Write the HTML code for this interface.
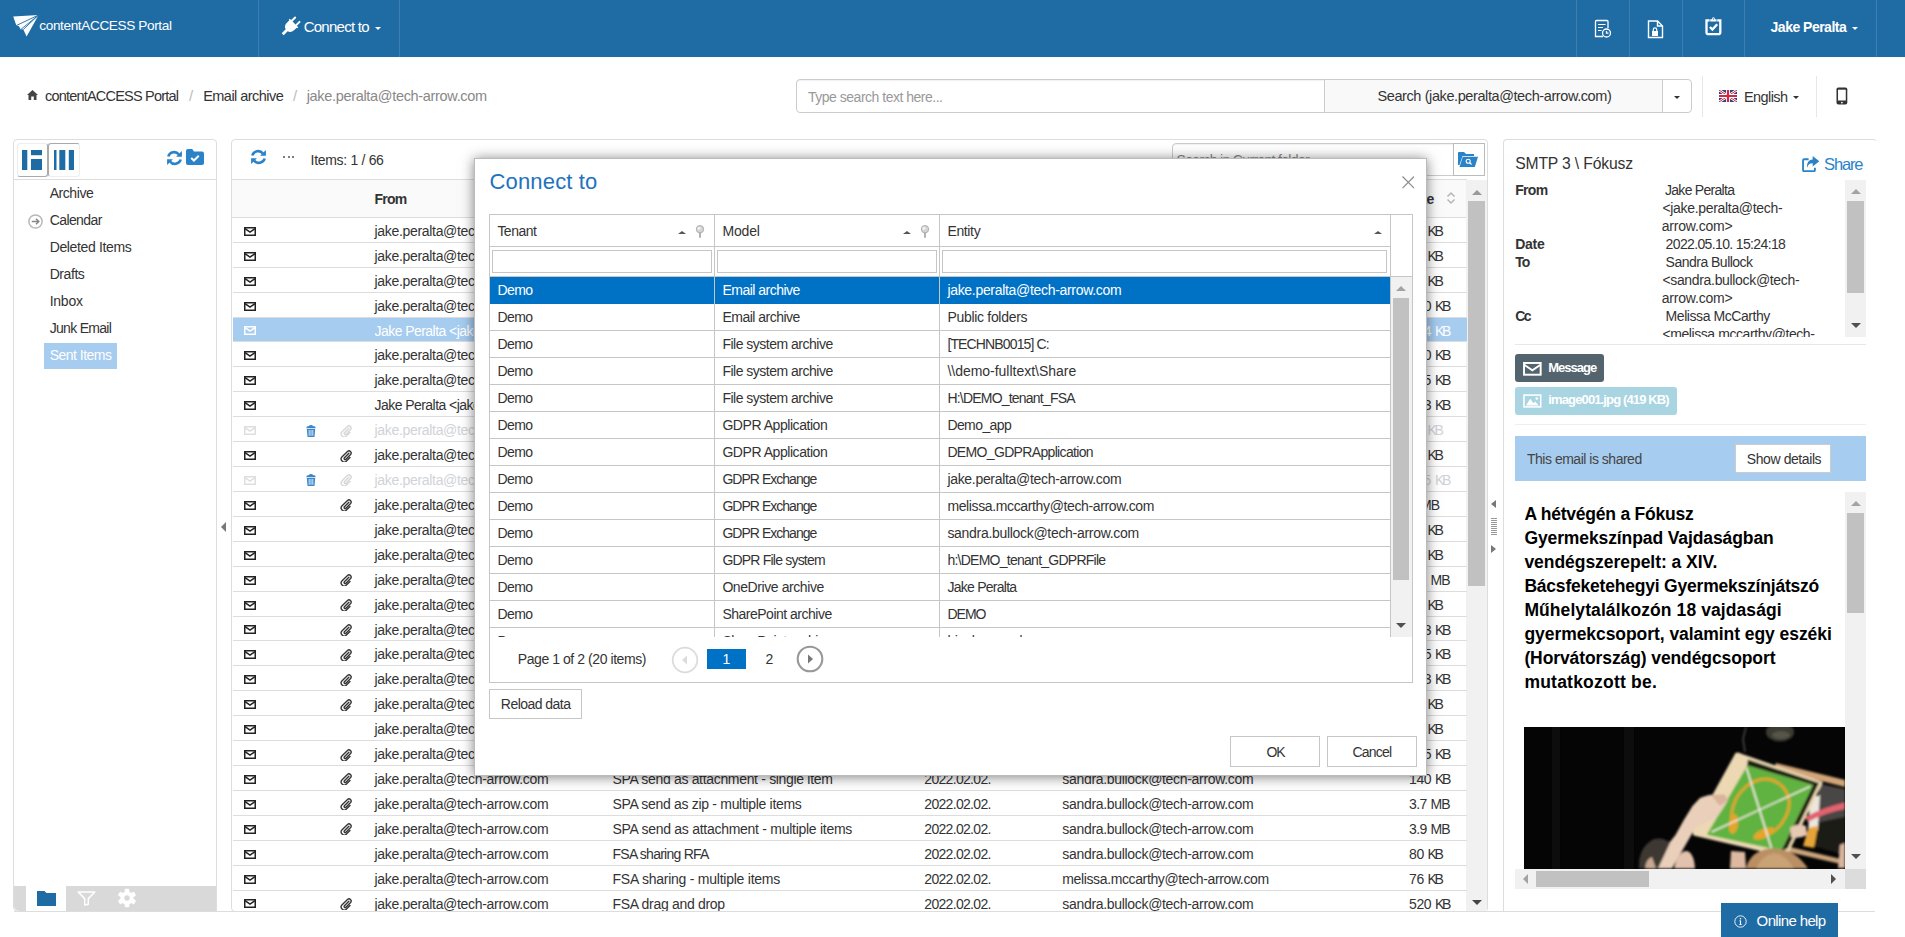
<!DOCTYPE html>
<html><head><meta charset="utf-8"><title>contentACCESS Portal</title><style>
*{box-sizing:border-box;margin:0;padding:0}
html,body{width:1905px;height:937px;overflow:hidden;background:#fff}
body{font-family:"Liberation Sans",sans-serif;font-size:14px;color:#333;position:relative}
.abs{position:absolute}
.t{position:absolute;white-space:nowrap;line-height:16px}
.nav{position:absolute;left:0;top:0;width:1905px;height:57px;background:#1f6ca5}
.nd{position:absolute;top:0;width:1px;height:57px;background:rgba(255,255,255,.13)}
.panel{position:absolute;border:1px solid #ddd;border-radius:4px;background:#fff}
.hl{position:absolute;height:1px;background:#ddd}
.vl{position:absolute;width:1px;background:#ddd}
.row{position:absolute;left:233px;width:1234px;border-bottom:1px solid #ddd;height:24.915px}
.row .t{top:5.0px;font-size:14px}
.mrow{position:absolute;left:490px;width:900px;height:27px;border-bottom:1px solid #c6c6c6}
.mrow .t{top:5.3px;font-size:14px}
.btn{position:absolute;border:1px solid #c6c6c6;background:#fff;text-align:center;color:#333}
</style></head><body>
<div class="nav">
<div class="nd" style="left:258px"></div>
<div class="nd" style="left:399px"></div>
<div class="nd" style="left:1576px"></div>
<div class="nd" style="left:1629px"></div>
<div class="nd" style="left:1682px"></div>
<div class="nd" style="left:1744px"></div>
<div class="nd" style="left:1876px"></div>
<svg class="abs" style="left:13px;top:14px" width="27" height="24" viewBox="13 14 27 24"><path d="M13.2 16.4 L38.6 15 L26.6 36.4 L23.2 29.2 L20.6 29.6 L19 26.2 L16.4 25.4 Z" fill="#fff"/><path d="M38.6 15 L16.2 25.6 M38.6 15 L20.4 29.8 M38.6 15 L23.4 29.4" stroke="#1f6ca5" stroke-width="0.9"/></svg>
<div class="t" style="left:39.3px;top:17.8px;font-size:13.6px;letter-spacing:-0.377px;color:#fff">contentACCESS Portal</div>
<svg class="abs" style="left:279px;top:15px" width="23" height="23" viewBox="-11.5 -11.5 23 23"><g transform="rotate(45)" fill="#fff"><rect x="-4.1" y="-10.6" width="2" height="6.5" rx="0.9"/><rect x="2.1" y="-10.6" width="2" height="6.5" rx="0.9"/><path d="M-6 -5 H6 V-3.6 H5.2 V0.2 Q5 4.6 1.4 5.4 V11 H-1.4 V5.4 Q-5 4.6 -5.2 0.2 V-3.6 H-6 Z"/></g></svg>
<div class="t" style="left:303.7px;top:19px;font-size:15px;letter-spacing:-0.745px;color:#fff">Connect to</div>
<div class="abs" style="left:375px;top:26.5px;border:3.5px solid transparent;border-top-color:#fff"></div>
<svg class="abs" style="left:1593px;top:19px" width="20" height="20" viewBox="0 0 20 20" fill="none" stroke="#fff" stroke-width="1.3"><path d="M10 17.5 H2.5 V2.5 Q2.5 1.5 3.5 1.5 H14 Q15 1.5 15 2.5 V9"/><path d="M5 5.5H12.5M5 8.5H10M5 11.5H8.5" stroke-width="1.2"/><circle cx="13.5" cy="14" r="4"/><path d="M13.5 12v2.2h2"/></svg>
<svg class="abs" style="left:1647px;top:19px" width="17" height="20" viewBox="0 0 17 20" fill="none" stroke="#fff" stroke-width="1.4"><path d="M1.5 18.5 V2 H10.5 L15.5 7 V18.5 Z"/><path d="M10.5 2 V7 H15.5" /><rect x="5" y="12" width="6" height="5" fill="#fff" stroke="none"/><path d="M6.3 12 V10.6 a1.7 1.7 0 0 1 3.4 0 V12" stroke-width="1.2"/></svg>
<svg class="abs" style="left:1704px;top:16px" width="19" height="20" viewBox="0 0 19 20" fill="none" stroke="#fff"><path d="M5.6 4.3 H2.5 V16.2 Q2.5 18.2 4.5 18.2 H14.3 Q16.3 18.2 16.3 16.2 V4.3 H13.2" stroke-width="2.3"/><path d="M6.2 5.6 V3.2 H7.8 Q8 1.2 9.4 1.2 Q10.8 1.2 11 3.2 H12.6 V5.6 Z" fill="#fff" stroke="none"/><circle cx="9.4" cy="2.9" r="0.7" fill="#1f6ca5" stroke="none"/><path d="M5.9 11 L8.4 13.6 L13.2 8.2" stroke-width="2.3"/></svg>
<div class="t" style="left:1770.6px;top:19px;font-size:14px;font-weight:bold;letter-spacing:-0.511px;color:#fff">Jake Peralta</div>
<div class="abs" style="left:1852.2px;top:26.5px;border:3.5px solid transparent;border-top-color:#fff"></div>
</div>
<svg class="abs" style="left:27px;top:90px" width="11" height="10" viewBox="0 0 11 10"><path d="M5.5 0 L11 5 H9.5 V10 H6.8 V6.5 H4.2 V10 H1.5 V5 H0 Z" fill="#444"/></svg>
<div class="t" style="left:45px;top:88px;font-size:14.5px;letter-spacing:-0.800px;">contentACCESS Portal</div>
<div class="t" style="left:189px;top:88px;font-size:15px;color:#bbb">/</div>
<div class="t" style="left:203.2px;top:88px;font-size:14.5px;letter-spacing:-0.541px;">Email archive</div>
<div class="t" style="left:293px;top:88px;font-size:15px;color:#bbb">/</div>
<div class="t" style="left:306.7px;top:88px;font-size:14.5px;letter-spacing:-0.322px;color:#888">jake.peralta@tech-arrow.com</div>
<div class="abs" style="left:796px;top:79px;width:529px;height:34px;border:1px solid #ccc;border-radius:4px 0 0 4px;box-shadow:inset 0 1px 1px rgba(0,0,0,.06)"></div>
<div class="t" style="left:808px;top:89px;font-size:14px;letter-spacing:-0.492px;color:#999">Type search text here...</div>
<div class="abs" style="left:1324px;top:79px;width:339px;height:34px;border:1px solid #ccc;background:#f9f9f9"></div>
<div class="t" style="left:1377.5px;top:88px;font-size:14.5px;letter-spacing:-0.404px;">Search (jake.peralta@tech-arrow.com)</div>
<div class="abs" style="left:1662px;top:79px;width:30px;height:34px;border:1px solid #ccc;border-radius:0 4px 4px 0;background:#fff"></div>
<div class="abs" style="left:1673.5px;top:95.8px;border:3.5px solid transparent;border-top-color:#333"></div>
<div class="vl" style="left:1702px;top:76px;height:41px;background:#e7e7e7"></div>
<div class="vl" style="left:1816px;top:76px;height:41px;background:#e7e7e7"></div>
<svg class="abs" style="left:1719px;top:90px" width="18" height="12" viewBox="0 0 18 12"><rect width="18" height="12" fill="#2b3f87"/><path d="M0 0L18 12M18 0L0 12" stroke="#fff" stroke-width="2.6"/><path d="M0 0L18 12M18 0L0 12" stroke="#d0283c" stroke-width="1"/><path d="M9 0V12M0 6H18" stroke="#fff" stroke-width="4"/><path d="M9 0V12M0 6H18" stroke="#d0283c" stroke-width="2.2"/></svg>
<div class="t" style="left:1744px;top:88.5px;font-size:14.5px;letter-spacing:-0.594px;">English</div>
<div class="abs" style="left:1793.2px;top:95.8px;border:3.5px solid transparent;border-top-color:#333"></div>
<svg class="abs" style="left:1836.2px;top:87px" width="11.8" height="18" viewBox="0 0 13 20"><rect x="0.5" y="0.5" width="12" height="19" rx="2" fill="#333"/><rect x="2.2" y="3" width="8.6" height="12" fill="#fff"/><circle cx="6.5" cy="17.3" r="1" fill="#fff"/></svg>
<div class="panel" style="left:13px;top:139px;width:204px;height:773px;border-radius:4px 4px 0 5px"></div>
<div class="hl" style="left:14px;top:179px;width:202px"></div>
<div class="abs" style="left:17.3px;top:143px;width:30.7px;height:34px;border:1px solid #ccc;border-radius:3px;border-top-color:#eee;border-left-color:#eee;border-right-color:#aaa;border-bottom-color:#aaa"></div>
<div class="abs" style="left:48px;top:143px;width:32px;height:34px;border:1px solid #eee;border-radius:3px;border-top-color:#aaa;border-left-color:#aaa"></div>
<svg class="abs" style="left:22px;top:150px" width="20" height="20" viewBox="0 0 20 20" fill="#1f6ca5"><rect x="0" y="0" width="5.3" height="20"/><rect x="9" y="0" width="11" height="5.2"/><rect x="9" y="9" width="11" height="11"/></svg>
<svg class="abs" style="left:54px;top:150px" width="20" height="20" viewBox="0 0 20 20" fill="#1f6ca5"><rect x="0" y="0" width="2.5" height="20"/><rect x="5.3" y="0" width="6" height="20"/><rect x="14.8" y="0" width="5.2" height="20"/></svg>
<svg class="abs" style="left:167px;top:150px" width="15" height="16" viewBox="0 0 15 16"><path d="M13.7 9.5 a6 6 0 0 1 -10.6 1.9 M1.3 6.5 a6 6 0 0 1 10.6 -1.9" fill="none" stroke="#2a83c8" stroke-width="2.6"/><path d="M14.9 0.9 V6.7 H9.1 Z M0.1 15.1 V9.3 H5.9 Z" fill="#2a83c8"/></svg>
<svg class="abs" style="left:186px;top:149px" width="18" height="16" viewBox="0 0 18 16"><path d="M0 2 Q0 0 2 0 H5.5 Q6.6 0 7.2 1.2 L7.8 2.5 H16 Q18 2.5 18 4.5 V14 Q18 16 16 16 H2 Q0 16 0 14 Z" fill="#2a83c8"/><path d="M5.2 9 L7.9 11.5 L12.8 6.7" fill="none" stroke="#fff" stroke-width="2"/></svg>
<div class="t" style="left:49.7px;top:185.2px;font-size:14px;letter-spacing:-0.440px;">Archive</div>
<div class="t" style="left:49.7px;top:212.2px;font-size:14px;letter-spacing:-0.589px;">Calendar</div>
<div class="t" style="left:49.7px;top:239.2px;font-size:14px;letter-spacing:-0.359px;">Deleted Items</div>
<div class="t" style="left:49.7px;top:266.2px;font-size:14px;letter-spacing:-0.440px;">Drafts</div>
<div class="t" style="left:49.7px;top:293.2px;font-size:14px;letter-spacing:-0.250px;">Inbox</div>
<div class="t" style="left:49.7px;top:320.2px;font-size:14px;letter-spacing:-0.697px;">Junk Email</div>
<svg class="abs" style="left:28px;top:213.8px" width="15" height="15" viewBox="0 0 15 15" fill="none" stroke="#b8b8b8" stroke-width="1.5"><circle cx="7.5" cy="7.5" r="6.6"/><path d="M3.8 7.5 H10.5 M8 4.8 L10.8 7.5 L8 10.2" stroke="#888"/></svg>
<div class="abs" style="left:44px;top:343px;width:73px;height:25.5px;background:#a6ccf0"></div>
<div class="t" style="left:49.7px;top:347.2px;font-size:14px;letter-spacing:-0.512px;color:#fff">Sent Items</div>
<div class="abs" style="left:14px;top:886px;width:202px;height:25px;background:#d9d9d9;border-radius:0 0 0 5px"></div>
<div class="abs" style="left:26px;top:886px;width:40px;height:25px;background:#fff"></div>
<svg class="abs" style="left:37px;top:891px" width="19" height="15" viewBox="0 0 19 15"><path d="M0 0 H7.5 L9.5 2 H19 V15 H0 Z" fill="#1f6ca5"/></svg>
<svg class="abs" style="left:77px;top:891px" width="19" height="15" viewBox="0 0 19 15"><path d="M1.2 1 H17.8 L11.3 7.6 V13.2 L7.7 14 V7.6 Z" fill="none" stroke="#fff" stroke-width="1.5" stroke-linejoin="round"/></svg>
<svg class="abs" style="left:116.8px;top:888px" width="20" height="20" viewBox="-10 -10 20 20"><g fill="#fff"><circle r="6.6"/><rect x="-2.3" y="-9.2" width="4.6" height="5" rx="1" transform="rotate(0)"/><rect x="-2.3" y="-9.2" width="4.6" height="5" rx="1" transform="rotate(60)"/><rect x="-2.3" y="-9.2" width="4.6" height="5" rx="1" transform="rotate(120)"/><rect x="-2.3" y="-9.2" width="4.6" height="5" rx="1" transform="rotate(180)"/><rect x="-2.3" y="-9.2" width="4.6" height="5" rx="1" transform="rotate(240)"/><rect x="-2.3" y="-9.2" width="4.6" height="5" rx="1" transform="rotate(300)"/></g><circle r="2.7" fill="#d9d9d9"/></svg>
<div class="abs" style="left:220.5px;top:522px;border:5px solid transparent;border-right-color:#777;border-left-width:0"></div>
<div class="panel" style="left:231px;top:139px;width:1257px;height:773px"></div>
<svg class="abs" style="left:250.5px;top:148.5px" width="15" height="16" viewBox="0 0 15 16"><path d="M13.7 9.5 a6 6 0 0 1 -10.6 1.9 M1.3 6.5 a6 6 0 0 1 10.6 -1.9" fill="none" stroke="#2a83c8" stroke-width="2.6"/><path d="M14.9 0.9 V6.7 H9.1 Z M0.1 15.1 V9.3 H5.9 Z" fill="#2a83c8"/></svg>
<div class="abs" style="left:283px;top:156px;width:2.2px;height:2.2px;background:#555;border-radius:1px"></div>
<div class="abs" style="left:287.5px;top:156px;width:2.2px;height:2.2px;background:#555;border-radius:1px"></div>
<div class="abs" style="left:292px;top:156px;width:2.2px;height:2.2px;background:#555;border-radius:1px"></div>
<div class="t" style="left:310.6px;top:152px;font-size:14px;letter-spacing:-0.310px;">Items: 1 / 66</div>
<div class="abs" style="left:1172px;top:143.2px;width:282px;height:32.4px;border:1px solid #ccc;border-radius:4px 0 0 4px;box-shadow:inset 0 1px 1px rgba(0,0,0,.06)"></div>
<div class="t" style="left:1176.6px;top:151.8px;font-size:14px;letter-spacing:-0.676px;color:#888">Search in Current folder</div>
<div class="abs" style="left:1453.4px;top:143px;width:31.4px;height:32.6px;border:1px solid #bbb;background:#fff"></div>
<svg class="abs" style="left:1458px;top:152px" width="20" height="15" viewBox="0 0 20 15"><path d="M0 0.8 Q0 0 .8 0 H6 L8 2 H16 V4 H4.5 L1.5 13 H0 Z" fill="#2a83c8"/><path d="M4.8 4.8 H20 L16.8 15 H1.5 Z" fill="#2a83c8"/><circle cx="10.2" cy="9.2" r="2" fill="none" stroke="#fff" stroke-width="1.1"/><path d="M11.7 10.7 L13.5 12.5" stroke="#fff" stroke-width="1.2"/></svg>
<div class="abs" style="left:232px;top:179px;width:1235px;height:38.8px;background:#fafafa;border-top:1px solid #ddd;border-bottom:1px solid #ddd"></div>
<div class="t" style="left:374.5px;top:191.3px;font-size:14px;font-weight:bold;letter-spacing:-0.750px;">From</div>
<div class="t" style="left:1409px;top:191.3px;font-size:14px;font-weight:bold;letter-spacing:-0.878px;">Size</div>
<svg class="abs" style="left:1446px;top:191px" width="10" height="14" viewBox="0 0 10 14" fill="none" stroke="#b5b5b5" stroke-width="1.5"><path d="M1.5 5.5 L5 2 L8.5 5.5 M1.5 8.5 L5 12 L8.5 8.5"/></svg>
<div class="abs" style="left:1466px;top:180px;width:21px;height:731px;background:#f1f1f1"></div>
<div class="abs" style="left:1468.3px;top:201px;width:16.7px;height:385px;background:#c1c1c1"></div>
<div class="abs" style="left:1471.5px;top:190px;border:5px solid transparent;border-bottom-color:#999;border-top-width:0;border-bottom-width:5px"></div>
<div class="abs" style="left:1471.5px;top:900px;border:5px solid transparent;border-top-color:#444;border-bottom-width:0;border-top-width:5px"></div>
<div class="abs" style="left:233px;top:218px;width:1234px;height:693px;overflow:hidden">
<div class="row" style="left:0;top:-0.10px;color:#333">
<svg class="abs" style="left:11px;top:8.9px" width="12" height="9" viewBox="0 0 12 9" fill="none" stroke="#222" stroke-width="1.5"><rect x="0.75" y="0.75" width="10.5" height="7.5"/><path d="M1 1.6 L6 5.2 L11 1.6"/></svg>
<div class="t" style="left:141.5px;letter-spacing:-0.314px">jake.peralta@tech-arrow.com</div>
<div class="t" style="left:1176.0px;letter-spacing:-0.386px">12</div>
<div class="t" style="left:1194.5px;letter-spacing:-2.288px">KB</div>
</div>
<div class="row" style="left:0;top:24.81px;color:#333">
<svg class="abs" style="left:11px;top:8.9px" width="12" height="9" viewBox="0 0 12 9" fill="none" stroke="#222" stroke-width="1.5"><rect x="0.75" y="0.75" width="10.5" height="7.5"/><path d="M1 1.6 L6 5.2 L11 1.6"/></svg>
<div class="t" style="left:141.5px;letter-spacing:-0.314px">jake.peralta@tech-arrow.com</div>
<div class="t" style="left:1176.0px;letter-spacing:-0.386px">14</div>
<div class="t" style="left:1194.5px;letter-spacing:-2.288px">KB</div>
</div>
<div class="row" style="left:0;top:49.73px;color:#333">
<svg class="abs" style="left:11px;top:8.9px" width="12" height="9" viewBox="0 0 12 9" fill="none" stroke="#222" stroke-width="1.5"><rect x="0.75" y="0.75" width="10.5" height="7.5"/><path d="M1 1.6 L6 5.2 L11 1.6"/></svg>
<div class="t" style="left:141.5px;letter-spacing:-0.314px">jake.peralta@tech-arrow.com</div>
<div class="t" style="left:1176.0px;letter-spacing:0.133px">11</div>
<div class="t" style="left:1194.5px;letter-spacing:-2.288px">KB</div>
</div>
<div class="row" style="left:0;top:74.64px;color:#333">
<svg class="abs" style="left:11px;top:8.9px" width="12" height="9" viewBox="0 0 12 9" fill="none" stroke="#222" stroke-width="1.5"><rect x="0.75" y="0.75" width="10.5" height="7.5"/><path d="M1 1.6 L6 5.2 L11 1.6"/></svg>
<div class="t" style="left:141.5px;letter-spacing:-0.314px">jake.peralta@tech-arrow.com</div>
<div class="t" style="left:1176.0px;letter-spacing:-0.386px">100</div>
<div class="t" style="left:1201.9px;letter-spacing:-2.288px">KB</div>
</div>
<div class="row" style="left:0;top:99.56px;background:#a6ccf0;color:#fff">
<svg class="abs" style="left:11px;top:8.9px" width="12" height="9" viewBox="0 0 12 9" fill="none" stroke="#fff" stroke-width="1.5"><rect x="0.75" y="0.75" width="10.5" height="7.5"/><path d="M1 1.6 L6 5.2 L11 1.6"/></svg>
<div class="t" style="left:141.5px;letter-spacing:-0.547px">Jake Peralta &lt;jake.peralta@tech-arrow.com&gt;</div>
<div class="t" style="left:1176.0px;letter-spacing:-0.386px">424</div>
<div class="t" style="left:1201.9px;letter-spacing:-2.288px">KB</div>
</div>
<div class="row" style="left:0;top:124.48px;color:#333">
<svg class="abs" style="left:11px;top:8.9px" width="12" height="9" viewBox="0 0 12 9" fill="none" stroke="#222" stroke-width="1.5"><rect x="0.75" y="0.75" width="10.5" height="7.5"/><path d="M1 1.6 L6 5.2 L11 1.6"/></svg>
<div class="t" style="left:141.5px;letter-spacing:-0.314px">jake.peralta@tech-arrow.com</div>
<div class="t" style="left:1176.0px;letter-spacing:-0.386px">100</div>
<div class="t" style="left:1201.9px;letter-spacing:-2.288px">KB</div>
</div>
<div class="row" style="left:0;top:149.39px;color:#333">
<svg class="abs" style="left:11px;top:8.9px" width="12" height="9" viewBox="0 0 12 9" fill="none" stroke="#222" stroke-width="1.5"><rect x="0.75" y="0.75" width="10.5" height="7.5"/><path d="M1 1.6 L6 5.2 L11 1.6"/></svg>
<div class="t" style="left:141.5px;letter-spacing:-0.314px">jake.peralta@tech-arrow.com</div>
<div class="t" style="left:1176.0px;letter-spacing:-0.040px">115</div>
<div class="t" style="left:1201.9px;letter-spacing:-2.288px">KB</div>
</div>
<div class="row" style="left:0;top:174.31px;color:#333">
<svg class="abs" style="left:11px;top:8.9px" width="12" height="9" viewBox="0 0 12 9" fill="none" stroke="#222" stroke-width="1.5"><rect x="0.75" y="0.75" width="10.5" height="7.5"/><path d="M1 1.6 L6 5.2 L11 1.6"/></svg>
<div class="t" style="left:141.5px;letter-spacing:-0.547px">Jake Peralta &lt;jake.peralta@tech-arrow.com&gt;</div>
<div class="t" style="left:1176.0px;letter-spacing:-0.386px">123</div>
<div class="t" style="left:1201.9px;letter-spacing:-2.288px">KB</div>
</div>
<div class="row" style="left:0;top:199.22px;color:#d0d3d8">
<svg class="abs" style="left:11px;top:8.9px" width="12" height="9" viewBox="0 0 12 9" fill="none" stroke="#dedede" stroke-width="1.5"><rect x="0.75" y="0.75" width="10.5" height="7.5"/><path d="M1 1.6 L6 5.2 L11 1.6"/></svg>
<svg class="abs" style="left:73px;top:7.4px" width="10" height="12" viewBox="0 0 10 12"><path d="M0.2 3.2 Q0.3 1.2 3 1.1 Q3.4 0 5 0 Q6.6 0 7 1.1 Q9.7 1.2 9.8 3.2 Z" fill="#3a87cc"/><path d="M0.8 4 H9.2 L8.5 12 H1.5 Z" fill="#3a87cc"/><path d="M3.2 5 V10.8 M5 5 V10.8 M6.8 5 V10.8" stroke="#fff" stroke-width="0.8"/></svg>
<svg class="abs" style="left:107px;top:7.4px" width="12" height="12" viewBox="0 0 12 12" fill="none" stroke="#d6d6d6" stroke-width="1.35" stroke-linecap="round"><path d="M8.9 3.2 L4.4 7.7 a1 1 0 0 0 1.5 1.5 L10.6 4.5 a2.2 2.2 0 0 0 -3.1 -3.1 L2.1 6.8 a3 3 0 0 0 4.3 4.3 L10 7.5"/></svg>
<div class="t" style="left:141.5px;letter-spacing:-0.314px">jake.peralta@tech-arrow.com</div>
<div class="t" style="left:1176.0px;letter-spacing:-0.386px">21</div>
<div class="t" style="left:1194.5px;letter-spacing:-2.288px">KB</div>
</div>
<div class="row" style="left:0;top:224.13px;color:#333">
<svg class="abs" style="left:11px;top:8.9px" width="12" height="9" viewBox="0 0 12 9" fill="none" stroke="#222" stroke-width="1.5"><rect x="0.75" y="0.75" width="10.5" height="7.5"/><path d="M1 1.6 L6 5.2 L11 1.6"/></svg>
<svg class="abs" style="left:107px;top:7.4px" width="12" height="12" viewBox="0 0 12 12" fill="none" stroke="#333" stroke-width="1.35" stroke-linecap="round"><path d="M8.9 3.2 L4.4 7.7 a1 1 0 0 0 1.5 1.5 L10.6 4.5 a2.2 2.2 0 0 0 -3.1 -3.1 L2.1 6.8 a3 3 0 0 0 4.3 4.3 L10 7.5"/></svg>
<div class="t" style="left:141.5px;letter-spacing:-0.314px">jake.peralta@tech-arrow.com</div>
<div class="t" style="left:1176.0px;letter-spacing:-0.386px">92</div>
<div class="t" style="left:1194.5px;letter-spacing:-2.288px">KB</div>
</div>
<div class="row" style="left:0;top:249.05px;color:#d0d3d8">
<svg class="abs" style="left:11px;top:8.9px" width="12" height="9" viewBox="0 0 12 9" fill="none" stroke="#dedede" stroke-width="1.5"><rect x="0.75" y="0.75" width="10.5" height="7.5"/><path d="M1 1.6 L6 5.2 L11 1.6"/></svg>
<svg class="abs" style="left:73px;top:7.4px" width="10" height="12" viewBox="0 0 10 12"><path d="M0.2 3.2 Q0.3 1.2 3 1.1 Q3.4 0 5 0 Q6.6 0 7 1.1 Q9.7 1.2 9.8 3.2 Z" fill="#3a87cc"/><path d="M0.8 4 H9.2 L8.5 12 H1.5 Z" fill="#3a87cc"/><path d="M3.2 5 V10.8 M5 5 V10.8 M6.8 5 V10.8" stroke="#fff" stroke-width="0.8"/></svg>
<svg class="abs" style="left:107px;top:7.4px" width="12" height="12" viewBox="0 0 12 12" fill="none" stroke="#d6d6d6" stroke-width="1.35" stroke-linecap="round"><path d="M8.9 3.2 L4.4 7.7 a1 1 0 0 0 1.5 1.5 L10.6 4.5 a2.2 2.2 0 0 0 -3.1 -3.1 L2.1 6.8 a3 3 0 0 0 4.3 4.3 L10 7.5"/></svg>
<div class="t" style="left:141.5px;letter-spacing:-0.314px">jake.peralta@tech-arrow.com</div>
<div class="t" style="left:1176.0px;letter-spacing:-0.040px">115</div>
<div class="t" style="left:1201.9px;letter-spacing:-2.288px">KB</div>
</div>
<div class="row" style="left:0;top:273.97px;color:#333">
<svg class="abs" style="left:11px;top:8.9px" width="12" height="9" viewBox="0 0 12 9" fill="none" stroke="#222" stroke-width="1.5"><rect x="0.75" y="0.75" width="10.5" height="7.5"/><path d="M1 1.6 L6 5.2 L11 1.6"/></svg>
<svg class="abs" style="left:107px;top:7.4px" width="12" height="12" viewBox="0 0 12 12" fill="none" stroke="#333" stroke-width="1.35" stroke-linecap="round"><path d="M8.9 3.2 L4.4 7.7 a1 1 0 0 0 1.5 1.5 L10.6 4.5 a2.2 2.2 0 0 0 -3.1 -3.1 L2.1 6.8 a3 3 0 0 0 4.3 4.3 L10 7.5"/></svg>
<div class="t" style="left:141.5px;letter-spacing:-0.314px">jake.peralta@tech-arrow.com</div>
<div class="t" style="left:1176.0px;letter-spacing:-0.386px">1</div>
<div class="t" style="left:1187.1px;letter-spacing:-1.000px">MB</div>
</div>
<div class="row" style="left:0;top:298.88px;color:#333">
<svg class="abs" style="left:11px;top:8.9px" width="12" height="9" viewBox="0 0 12 9" fill="none" stroke="#222" stroke-width="1.5"><rect x="0.75" y="0.75" width="10.5" height="7.5"/><path d="M1 1.6 L6 5.2 L11 1.6"/></svg>
<div class="t" style="left:141.5px;letter-spacing:-0.314px">jake.peralta@tech-arrow.com</div>
<div class="t" style="left:1176.0px;letter-spacing:0.133px">11</div>
<div class="t" style="left:1194.5px;letter-spacing:-2.288px">KB</div>
</div>
<div class="row" style="left:0;top:323.79px;color:#333">
<svg class="abs" style="left:11px;top:8.9px" width="12" height="9" viewBox="0 0 12 9" fill="none" stroke="#222" stroke-width="1.5"><rect x="0.75" y="0.75" width="10.5" height="7.5"/><path d="M1 1.6 L6 5.2 L11 1.6"/></svg>
<div class="t" style="left:141.5px;letter-spacing:-0.314px">jake.peralta@tech-arrow.com</div>
<div class="t" style="left:1176.0px;letter-spacing:-0.386px">12</div>
<div class="t" style="left:1194.5px;letter-spacing:-2.288px">KB</div>
</div>
<div class="row" style="left:0;top:348.71px;color:#333">
<svg class="abs" style="left:11px;top:8.9px" width="12" height="9" viewBox="0 0 12 9" fill="none" stroke="#222" stroke-width="1.5"><rect x="0.75" y="0.75" width="10.5" height="7.5"/><path d="M1 1.6 L6 5.2 L11 1.6"/></svg>
<svg class="abs" style="left:107px;top:7.4px" width="12" height="12" viewBox="0 0 12 12" fill="none" stroke="#333" stroke-width="1.35" stroke-linecap="round"><path d="M8.9 3.2 L4.4 7.7 a1 1 0 0 0 1.5 1.5 L10.6 4.5 a2.2 2.2 0 0 0 -3.1 -3.1 L2.1 6.8 a3 3 0 0 0 4.3 4.3 L10 7.5"/></svg>
<div class="t" style="left:141.5px;letter-spacing:-0.314px">jake.peralta@tech-arrow.com</div>
<div class="t" style="left:1176.0px;letter-spacing:-0.554px">1.1</div>
<div class="t" style="left:1197.5px;letter-spacing:-1.000px">MB</div>
</div>
<div class="row" style="left:0;top:373.62px;color:#333">
<svg class="abs" style="left:11px;top:8.9px" width="12" height="9" viewBox="0 0 12 9" fill="none" stroke="#222" stroke-width="1.5"><rect x="0.75" y="0.75" width="10.5" height="7.5"/><path d="M1 1.6 L6 5.2 L11 1.6"/></svg>
<svg class="abs" style="left:107px;top:7.4px" width="12" height="12" viewBox="0 0 12 12" fill="none" stroke="#333" stroke-width="1.35" stroke-linecap="round"><path d="M8.9 3.2 L4.4 7.7 a1 1 0 0 0 1.5 1.5 L10.6 4.5 a2.2 2.2 0 0 0 -3.1 -3.1 L2.1 6.8 a3 3 0 0 0 4.3 4.3 L10 7.5"/></svg>
<div class="t" style="left:141.5px;letter-spacing:-0.314px">jake.peralta@tech-arrow.com</div>
<div class="t" style="left:1176.0px;letter-spacing:-0.386px">87</div>
<div class="t" style="left:1194.5px;letter-spacing:-2.288px">KB</div>
</div>
<div class="row" style="left:0;top:398.54px;color:#333">
<svg class="abs" style="left:11px;top:8.9px" width="12" height="9" viewBox="0 0 12 9" fill="none" stroke="#222" stroke-width="1.5"><rect x="0.75" y="0.75" width="10.5" height="7.5"/><path d="M1 1.6 L6 5.2 L11 1.6"/></svg>
<svg class="abs" style="left:107px;top:7.4px" width="12" height="12" viewBox="0 0 12 12" fill="none" stroke="#333" stroke-width="1.35" stroke-linecap="round"><path d="M8.9 3.2 L4.4 7.7 a1 1 0 0 0 1.5 1.5 L10.6 4.5 a2.2 2.2 0 0 0 -3.1 -3.1 L2.1 6.8 a3 3 0 0 0 4.3 4.3 L10 7.5"/></svg>
<div class="t" style="left:141.5px;letter-spacing:-0.314px">jake.peralta@tech-arrow.com</div>
<div class="t" style="left:1176.0px;letter-spacing:-0.386px">133</div>
<div class="t" style="left:1201.9px;letter-spacing:-2.288px">KB</div>
</div>
<div class="row" style="left:0;top:423.46px;color:#333">
<svg class="abs" style="left:11px;top:8.9px" width="12" height="9" viewBox="0 0 12 9" fill="none" stroke="#222" stroke-width="1.5"><rect x="0.75" y="0.75" width="10.5" height="7.5"/><path d="M1 1.6 L6 5.2 L11 1.6"/></svg>
<svg class="abs" style="left:107px;top:7.4px" width="12" height="12" viewBox="0 0 12 12" fill="none" stroke="#333" stroke-width="1.35" stroke-linecap="round"><path d="M8.9 3.2 L4.4 7.7 a1 1 0 0 0 1.5 1.5 L10.6 4.5 a2.2 2.2 0 0 0 -3.1 -3.1 L2.1 6.8 a3 3 0 0 0 4.3 4.3 L10 7.5"/></svg>
<div class="t" style="left:141.5px;letter-spacing:-0.314px">jake.peralta@tech-arrow.com</div>
<div class="t" style="left:1176.0px;letter-spacing:-0.386px">125</div>
<div class="t" style="left:1201.9px;letter-spacing:-2.288px">KB</div>
</div>
<div class="row" style="left:0;top:448.37px;color:#333">
<svg class="abs" style="left:11px;top:8.9px" width="12" height="9" viewBox="0 0 12 9" fill="none" stroke="#222" stroke-width="1.5"><rect x="0.75" y="0.75" width="10.5" height="7.5"/><path d="M1 1.6 L6 5.2 L11 1.6"/></svg>
<svg class="abs" style="left:107px;top:7.4px" width="12" height="12" viewBox="0 0 12 12" fill="none" stroke="#333" stroke-width="1.35" stroke-linecap="round"><path d="M8.9 3.2 L4.4 7.7 a1 1 0 0 0 1.5 1.5 L10.6 4.5 a2.2 2.2 0 0 0 -3.1 -3.1 L2.1 6.8 a3 3 0 0 0 4.3 4.3 L10 7.5"/></svg>
<div class="t" style="left:141.5px;letter-spacing:-0.314px">jake.peralta@tech-arrow.com</div>
<div class="t" style="left:1176.0px;letter-spacing:-0.386px">123</div>
<div class="t" style="left:1201.9px;letter-spacing:-2.288px">KB</div>
</div>
<div class="row" style="left:0;top:473.28px;color:#333">
<svg class="abs" style="left:11px;top:8.9px" width="12" height="9" viewBox="0 0 12 9" fill="none" stroke="#222" stroke-width="1.5"><rect x="0.75" y="0.75" width="10.5" height="7.5"/><path d="M1 1.6 L6 5.2 L11 1.6"/></svg>
<svg class="abs" style="left:107px;top:7.4px" width="12" height="12" viewBox="0 0 12 12" fill="none" stroke="#333" stroke-width="1.35" stroke-linecap="round"><path d="M8.9 3.2 L4.4 7.7 a1 1 0 0 0 1.5 1.5 L10.6 4.5 a2.2 2.2 0 0 0 -3.1 -3.1 L2.1 6.8 a3 3 0 0 0 4.3 4.3 L10 7.5"/></svg>
<div class="t" style="left:141.5px;letter-spacing:-0.314px">jake.peralta@tech-arrow.com</div>
<div class="t" style="left:1176.0px;letter-spacing:-0.386px">82</div>
<div class="t" style="left:1194.5px;letter-spacing:-2.288px">KB</div>
</div>
<div class="row" style="left:0;top:498.20px;color:#333">
<svg class="abs" style="left:11px;top:8.9px" width="12" height="9" viewBox="0 0 12 9" fill="none" stroke="#222" stroke-width="1.5"><rect x="0.75" y="0.75" width="10.5" height="7.5"/><path d="M1 1.6 L6 5.2 L11 1.6"/></svg>
<div class="t" style="left:141.5px;letter-spacing:-0.314px">jake.peralta@tech-arrow.com</div>
<div class="t" style="left:1176.0px;letter-spacing:0.133px">11</div>
<div class="t" style="left:1194.5px;letter-spacing:-2.288px">KB</div>
</div>
<div class="row" style="left:0;top:523.12px;color:#333">
<svg class="abs" style="left:11px;top:8.9px" width="12" height="9" viewBox="0 0 12 9" fill="none" stroke="#222" stroke-width="1.5"><rect x="0.75" y="0.75" width="10.5" height="7.5"/><path d="M1 1.6 L6 5.2 L11 1.6"/></svg>
<svg class="abs" style="left:107px;top:7.4px" width="12" height="12" viewBox="0 0 12 12" fill="none" stroke="#333" stroke-width="1.35" stroke-linecap="round"><path d="M8.9 3.2 L4.4 7.7 a1 1 0 0 0 1.5 1.5 L10.6 4.5 a2.2 2.2 0 0 0 -3.1 -3.1 L2.1 6.8 a3 3 0 0 0 4.3 4.3 L10 7.5"/></svg>
<div class="t" style="left:141.5px;letter-spacing:-0.314px">jake.peralta@tech-arrow.com</div>
<div class="t" style="left:1176.0px;letter-spacing:-0.386px">125</div>
<div class="t" style="left:1201.9px;letter-spacing:-2.288px">KB</div>
</div>
<div class="row" style="left:0;top:548.03px;color:#333">
<svg class="abs" style="left:11px;top:8.9px" width="12" height="9" viewBox="0 0 12 9" fill="none" stroke="#222" stroke-width="1.5"><rect x="0.75" y="0.75" width="10.5" height="7.5"/><path d="M1 1.6 L6 5.2 L11 1.6"/></svg>
<svg class="abs" style="left:107px;top:7.4px" width="12" height="12" viewBox="0 0 12 12" fill="none" stroke="#333" stroke-width="1.35" stroke-linecap="round"><path d="M8.9 3.2 L4.4 7.7 a1 1 0 0 0 1.5 1.5 L10.6 4.5 a2.2 2.2 0 0 0 -3.1 -3.1 L2.1 6.8 a3 3 0 0 0 4.3 4.3 L10 7.5"/></svg>
<div class="t" style="left:141.5px;letter-spacing:-0.314px">jake.peralta@tech-arrow.com</div>
<div class="t" style="left:379.5px;letter-spacing:-0.323px">SPA send as attachment - single item</div>
<div class="t" style="left:691.3px;letter-spacing:-0.687px">2022.02.02.</div>
<div class="t" style="left:829.3px;letter-spacing:-0.317px">sandra.bullock@tech-arrow.com</div>
<div class="t" style="left:1176.0px;letter-spacing:-0.386px">140</div>
<div class="t" style="left:1201.9px;letter-spacing:-2.288px">KB</div>
</div>
<div class="row" style="left:0;top:572.94px;color:#333">
<svg class="abs" style="left:11px;top:8.9px" width="12" height="9" viewBox="0 0 12 9" fill="none" stroke="#222" stroke-width="1.5"><rect x="0.75" y="0.75" width="10.5" height="7.5"/><path d="M1 1.6 L6 5.2 L11 1.6"/></svg>
<svg class="abs" style="left:107px;top:7.4px" width="12" height="12" viewBox="0 0 12 12" fill="none" stroke="#333" stroke-width="1.35" stroke-linecap="round"><path d="M8.9 3.2 L4.4 7.7 a1 1 0 0 0 1.5 1.5 L10.6 4.5 a2.2 2.2 0 0 0 -3.1 -3.1 L2.1 6.8 a3 3 0 0 0 4.3 4.3 L10 7.5"/></svg>
<div class="t" style="left:141.5px;letter-spacing:-0.314px">jake.peralta@tech-arrow.com</div>
<div class="t" style="left:379.5px;letter-spacing:-0.310px">SPA send as zip - multiple items</div>
<div class="t" style="left:691.3px;letter-spacing:-0.687px">2022.02.02.</div>
<div class="t" style="left:829.3px;letter-spacing:-0.317px">sandra.bullock@tech-arrow.com</div>
<div class="t" style="left:1176.0px;letter-spacing:-0.554px">3.7</div>
<div class="t" style="left:1197.5px;letter-spacing:-1.000px">MB</div>
</div>
<div class="row" style="left:0;top:597.86px;color:#333">
<svg class="abs" style="left:11px;top:8.9px" width="12" height="9" viewBox="0 0 12 9" fill="none" stroke="#222" stroke-width="1.5"><rect x="0.75" y="0.75" width="10.5" height="7.5"/><path d="M1 1.6 L6 5.2 L11 1.6"/></svg>
<svg class="abs" style="left:107px;top:7.4px" width="12" height="12" viewBox="0 0 12 12" fill="none" stroke="#333" stroke-width="1.35" stroke-linecap="round"><path d="M8.9 3.2 L4.4 7.7 a1 1 0 0 0 1.5 1.5 L10.6 4.5 a2.2 2.2 0 0 0 -3.1 -3.1 L2.1 6.8 a3 3 0 0 0 4.3 4.3 L10 7.5"/></svg>
<div class="t" style="left:141.5px;letter-spacing:-0.314px">jake.peralta@tech-arrow.com</div>
<div class="t" style="left:379.5px;letter-spacing:-0.277px">SPA send as attachment - multiple items</div>
<div class="t" style="left:691.3px;letter-spacing:-0.687px">2022.02.02.</div>
<div class="t" style="left:829.3px;letter-spacing:-0.317px">sandra.bullock@tech-arrow.com</div>
<div class="t" style="left:1176.0px;letter-spacing:-0.554px">3.9</div>
<div class="t" style="left:1197.5px;letter-spacing:-1.000px">MB</div>
</div>
<div class="row" style="left:0;top:622.77px;color:#333">
<svg class="abs" style="left:11px;top:8.9px" width="12" height="9" viewBox="0 0 12 9" fill="none" stroke="#222" stroke-width="1.5"><rect x="0.75" y="0.75" width="10.5" height="7.5"/><path d="M1 1.6 L6 5.2 L11 1.6"/></svg>
<div class="t" style="left:141.5px;letter-spacing:-0.314px">jake.peralta@tech-arrow.com</div>
<div class="t" style="left:379.5px;letter-spacing:-0.745px">FSA sharing RFA</div>
<div class="t" style="left:691.3px;letter-spacing:-0.687px">2022.02.02.</div>
<div class="t" style="left:829.3px;letter-spacing:-0.317px">sandra.bullock@tech-arrow.com</div>
<div class="t" style="left:1176.0px;letter-spacing:-0.386px">80</div>
<div class="t" style="left:1194.5px;letter-spacing:-2.288px">KB</div>
</div>
<div class="row" style="left:0;top:647.69px;color:#333">
<svg class="abs" style="left:11px;top:8.9px" width="12" height="9" viewBox="0 0 12 9" fill="none" stroke="#222" stroke-width="1.5"><rect x="0.75" y="0.75" width="10.5" height="7.5"/><path d="M1 1.6 L6 5.2 L11 1.6"/></svg>
<div class="t" style="left:141.5px;letter-spacing:-0.314px">jake.peralta@tech-arrow.com</div>
<div class="t" style="left:379.5px;letter-spacing:-0.242px">FSA sharing - multiple items</div>
<div class="t" style="left:691.3px;letter-spacing:-0.687px">2022.02.02.</div>
<div class="t" style="left:829.3px;letter-spacing:-0.375px">melissa.mccarthy@tech-arrow.com</div>
<div class="t" style="left:1176.0px;letter-spacing:-0.386px">76</div>
<div class="t" style="left:1194.5px;letter-spacing:-2.288px">KB</div>
</div>
<div class="row" style="left:0;top:672.60px;color:#333">
<svg class="abs" style="left:11px;top:8.9px" width="12" height="9" viewBox="0 0 12 9" fill="none" stroke="#222" stroke-width="1.5"><rect x="0.75" y="0.75" width="10.5" height="7.5"/><path d="M1 1.6 L6 5.2 L11 1.6"/></svg>
<svg class="abs" style="left:107px;top:7.4px" width="12" height="12" viewBox="0 0 12 12" fill="none" stroke="#333" stroke-width="1.35" stroke-linecap="round"><path d="M8.9 3.2 L4.4 7.7 a1 1 0 0 0 1.5 1.5 L10.6 4.5 a2.2 2.2 0 0 0 -3.1 -3.1 L2.1 6.8 a3 3 0 0 0 4.3 4.3 L10 7.5"/></svg>
<div class="t" style="left:141.5px;letter-spacing:-0.314px">jake.peralta@tech-arrow.com</div>
<div class="t" style="left:379.5px;letter-spacing:-0.313px">FSA drag and drop</div>
<div class="t" style="left:691.3px;letter-spacing:-0.687px">2022.02.02.</div>
<div class="t" style="left:829.3px;letter-spacing:-0.317px">sandra.bullock@tech-arrow.com</div>
<div class="t" style="left:1176.0px;letter-spacing:-0.386px">520</div>
<div class="t" style="left:1201.9px;letter-spacing:-2.288px">KB</div>
</div>
</div>
<div class="abs" style="left:1491.3px;top:500px;border:4px solid transparent;border-right-color:#777;border-left-width:0;border-right-width:5px"></div>
<div class="abs" style="left:1491.3px;top:545px;border:4px solid transparent;border-left-color:#777;border-right-width:0;border-left-width:5px"></div>
<div class="abs" style="left:1491.3px;top:518px;width:5.7px;height:17.5px;background:repeating-linear-gradient(#999 0 1px,#fff 1px 2px)"></div>
<div class="panel" style="left:1503px;top:139px;width:374px;height:773px;border-right:none;border-bottom:none;border-radius:4px 4px 0 0"></div>
<div class="abs" style="left:1870px;top:141px;width:20px;height:765px;background:#fff"></div>
<div class="t" style="left:1515.2px;top:155.3px;font-size:15.7px;letter-spacing:-0.154px;line-height:18px">SMTP 3 \ Fókusz</div>
<svg class="abs" style="left:1801.9px;top:155.6px" width="17.3" height="16.3" viewBox="0 0 17 16"><path d="M6.5 3.2 H2.2 Q1 3.2 1 4.4 V13.8 Q1 15 2.2 15 H11.5 Q12.7 15 12.7 13.8 V11.5" fill="none" stroke="#2a83c8" stroke-width="1.8"/><path d="M10.5 0 L17 5.2 L10.5 10.4 V7.2 Q6.5 7 5 11.5 Q4.2 4 10.5 3.4 Z" fill="#2a83c8"/></svg>
<div class="t" style="left:1824px;top:155.2px;font-size:16.5px;letter-spacing:-1.126px;color:#2a83c8;line-height:18px">Share</div>
<div class="t" style="left:1515.2px;top:182.4px;font-size:14px;font-weight:bold;letter-spacing:-0.675px;">From</div>
<div class="t" style="left:1515.2px;top:236.3px;font-size:14px;font-weight:bold;letter-spacing:-0.236px;">Date</div>
<div class="t" style="left:1515.2px;top:254.39999999999998px;font-size:14px;font-weight:bold;letter-spacing:-0.832px;">To</div>
<div class="t" style="left:1515.2px;top:308.4px;font-size:14px;font-weight:bold;letter-spacing:-1.448px;">Cc</div>
<div class="t" style="left:1665px;top:182.4px;font-size:14px;letter-spacing:-0.718px;">Jake Peralta</div>
<div class="t" style="left:1662.4px;top:200.4px;font-size:14px;letter-spacing:-0.315px;">&lt;jake.peralta@tech-</div>
<div class="t" style="left:1661.8px;top:218.4px;font-size:14px;letter-spacing:-0.215px;">arrow.com&gt;</div>
<div class="t" style="left:1665.6px;top:236.3px;font-size:14px;letter-spacing:-0.637px;">2022.05.10. 15:24:18</div>
<div class="t" style="left:1665.6px;top:254.39999999999998px;font-size:14px;letter-spacing:-0.512px;">Sandra Bullock</div>
<div class="t" style="left:1662.4px;top:272.4px;font-size:14px;letter-spacing:-0.328px;">&lt;sandra.bullock@tech-</div>
<div class="t" style="left:1661.8px;top:290.4px;font-size:14px;letter-spacing:-0.215px;">arrow.com&gt;</div>
<div class="t" style="left:1665.6px;top:308.4px;font-size:14px;letter-spacing:-0.434px;">Melissa McCarthy</div>
<div class="abs" style="left:1660px;top:325px;width:183px;height:11.8px;overflow:hidden"><div class="t" style="left:2.4px;top:1.4px;font-size:14px;letter-spacing:-0.415px">&lt;melissa.mccarthy@tech-</div></div>
<div class="abs" style="left:1845.1px;top:180.3px;width:20.7px;height:156.5px;background:#f1f1f1"></div>
<div class="abs" style="left:1847.4px;top:201.1px;width:16.4px;height:91.6px;background:#c1c1c1"></div>
<div class="abs" style="left:1851px;top:189.3px;border:5px solid transparent;border-bottom-color:#a3a3a3;border-top-width:0"></div>
<div class="abs" style="left:1851px;top:323px;border:5px solid transparent;border-top-color:#505050;border-bottom-width:0"></div>
<div class="hl" style="left:1515.2px;top:344.1px;width:350.6px;background:#e8e8e8"></div>
<div class="abs" style="left:1515.2px;top:354.1px;width:88.4px;height:27.8px;background:#53646f;border-radius:3px"></div>
<svg class="abs" style="left:1523px;top:362.2px" width="18.7" height="13.7" viewBox="0 0 19 14" fill="none" stroke="#fff" stroke-width="2"><rect x="1" y="1" width="17" height="12"/><path d="M1.5 3 L9.5 8.5 L17.5 3"/></svg>
<div class="t" style="left:1548.3px;top:359.9px;font-size:13px;font-weight:bold;letter-spacing:-1.017px;color:#fff">Message</div>
<div class="abs" style="left:1515.2px;top:387.2px;width:161.6px;height:27.7px;background:#a9d4e1;border-radius:3px"></div>
<svg class="abs" style="left:1523px;top:394.3px" width="18.7" height="14" viewBox="0 0 19 14"><rect x="1" y="1" width="17" height="12" fill="none" stroke="#fff" stroke-width="1.6"/><path d="M3 11.5 L7.3 4.6 L10.6 9.4 L12.4 7.6 L16 11.5 Z" fill="#fff"/><circle cx="14" cy="4.4" r="1.3" fill="#fff"/></svg>
<div class="t" style="left:1548.3px;top:391.9px;font-size:13px;font-weight:bold;letter-spacing:-0.867px;color:#fff">image001.jpg (419 KB)</div>
<div class="hl" style="left:1515.2px;top:424px;width:350.6px;background:#eee"></div>
<div class="abs" style="left:1515.2px;top:436px;width:350.6px;height:44.7px;background:#a6ccf0"></div>
<div class="t" style="left:1527px;top:451.2px;font-size:14px;letter-spacing:-0.489px;color:#444">This email is shared</div>
<div class="btn" style="left:1735.3px;top:444.4px;width:96.2px;height:29.1px;border-color:#ccc"></div>
<div class="t" style="left:1746.8px;top:451.2px;font-size:14px;letter-spacing:-0.415px;">Show details</div>
<div class="abs" style="left:1845.1px;top:492.2px;width:20.7px;height:376.5px;background:#f1f1f1"></div>
<div class="abs" style="left:1847.4px;top:513.2px;width:16.4px;height:99.4px;background:#c1c1c1"></div>
<div class="abs" style="left:1851px;top:500.6px;border:5px solid transparent;border-bottom-color:#a3a3a3;border-top-width:0"></div>
<div class="abs" style="left:1851px;top:854.3px;border:5px solid transparent;border-top-color:#505050;border-bottom-width:0"></div>
<div class="t" style="left:1524.4px;top:501.54px;font-size:17.5px;font-weight:bold;color:#000;line-height:24px;letter-spacing:-0.227px">A hétvégén a Fókusz</div>
<div class="t" style="left:1524.4px;top:525.54px;font-size:17.5px;font-weight:bold;color:#000;line-height:24px;letter-spacing:-0.104px">Gyermekszínpad Vajdaságban</div>
<div class="t" style="left:1524.4px;top:549.54px;font-size:17.5px;font-weight:bold;color:#000;line-height:24px;letter-spacing:-0.038px">vendégszerepelt: a XIV.</div>
<div class="t" style="left:1524.4px;top:573.54px;font-size:17.5px;font-weight:bold;color:#000;line-height:24px;letter-spacing:-0.207px">Bácsfeketehegyi Gyermekszínjátszó</div>
<div class="t" style="left:1524.4px;top:597.54px;font-size:17.5px;font-weight:bold;color:#000;line-height:24px;letter-spacing:0.086px">Műhelytalálkozón 18 vajdasági</div>
<div class="t" style="left:1524.4px;top:621.54px;font-size:17.5px;font-weight:bold;color:#000;line-height:24px;letter-spacing:-0.055px">gyermekcsoport, valamint egy eszéki</div>
<div class="t" style="left:1524.4px;top:645.54px;font-size:17.5px;font-weight:bold;color:#000;line-height:24px;letter-spacing:-0.100px">(Horvátország) vendégcsoport</div>
<div class="t" style="left:1524.4px;top:669.54px;font-size:17.5px;font-weight:bold;color:#000;line-height:24px;letter-spacing:0.226px">mutatkozott be.</div>
<div class="abs" style="left:1524px;top:727.4px;width:321px;height:141.3px;background:#050505;overflow:hidden">
<svg width="321" height="141.3" viewBox="0 0 321 141.3"><defs><filter id="bl" x="-5%" y="-5%" width="110%" height="110%"><feGaussianBlur stdDeviation="1.05"/></filter></defs><rect width="321" height="142" fill="#050505"/><g filter="url(#bl)"><rect x="28" y="0" width="8" height="142" fill="#0b0b0b"/><rect x="100" y="0" width="10" height="142" fill="#0a0a0a"/><ellipse cx="256" cy="5" rx="14" ry="9.5" fill="#3b3a33"/><ellipse cx="257" cy="8" rx="9" ry="4" fill="#55544a"/><path d="M222 0 L219 12 L221 25" stroke="#6a6a66" stroke-width="1" fill="none"/><path d="M252 36 L321 53 V60 L250 42 Z" fill="#d2a578"/><path d="M296 57 L321 62 V90 L292 96 Z" fill="#4a4744"/><path d="M294 96 L321 90 V128 L285 118 Z" fill="#1c1a19"/><path d="M286 71 L296 68 L294 103 L284 105 Z" fill="#ece6dc"/><path d="M284.5 101 L294 99 L290 121 L279 119 Z" fill="#e5a437"/><path d="M281 90 Q300 80 321 75.5 V82 Q300 86 284 95 Z" fill="#e2626f"/><path d="M262 119 L321 133 V138 L260 124 Z" fill="#c9a27a"/><path d="M316 118 L321 116 V141 H314 Z" fill="#d8b49c"/><path d="M211.5 26 Q214 24.5 218 27 L299 55 L262.5 130 L169.5 108.5 Q168 105 170 101.5 Z" fill="#ecd9b3"/><path d="M224 32.5 L295 56 L263.5 121.5 L257 124 L289 58 L223 38.5 Z" fill="#1a2410"/><path d="M223.3 38.4 L289 58.1 L257 123.8 L182.8 107.8 Z" fill="#60b340"/><path d="M207.5 96 Q206 72 224 58 Q244 45 259 60 Q272 76 258 96 Q254 102 247 106" fill="none" stroke="#e3a52b" stroke-width="2.8"/><ellipse cx="209.5" cy="97" rx="4.6" ry="10" transform="rotate(8 209.5 97)" fill="#e3a52b"/><ellipse cx="240" cy="106.5" rx="11.5" ry="4.6" transform="rotate(-24 240 106.5)" fill="#e3a52b"/><path d="M222.5 41 L247.5 121.5" stroke="#eeeadb" stroke-width="1.8"/><path d="M286 59.5 L187.5 105" stroke="#eeeadb" stroke-width="1.5"/><path d="M176 71 Q186 66 200 67.5 L204 73 Q198 84 192 91 L171 101.5 L148 141.5 H125 L151.5 108 Q160 92 168.5 79 Z" fill="#ead0bb"/><path d="M187 68 L201 67.5 L203.5 73 L196 79 Z" fill="#d9b39a"/><path d="M115 141.5 Q114 120 130 112 Q140 110 146 116 L134 141.5 Z" fill="#3d3732"/><path d="M121 141.5 Q122 132 128 130 L132 141.5 Z" fill="#c9a992"/><path d="M150 141.5 Q154 124 163 124 Q170 126 171 141.5 Z" fill="#e2c2ad"/><path d="M207 124 L221 125 L222 141.5 H206 Z" fill="#dcb9a0"/><path d="M266 101 Q272 96 282 99 L283 108 Q276 112 267 110 Z" fill="#e6c8b3"/><path d="M222 141.5 Q226 124 246 121.5 Q270 120 284 141.5 Z" fill="#b98f63"/><path d="M232 141.5 Q238 128 250 126 Q262 127 270 141.5 Z" fill="#c9a274"/></g></svg></div>
<div class="abs" style="left:1515.2px;top:868.7px;width:350.6px;height:20.5px;background:#f1f1f1"></div>
<div class="abs" style="left:1845.1px;top:868.7px;width:20.7px;height:20.5px;background:#dcdcdc"></div>
<div class="abs" style="left:1535.8px;top:870.6px;width:112.9px;height:16.8px;background:#c1c1c1"></div>
<div class="abs" style="left:1522.5px;top:874px;border:5px solid transparent;border-right-color:#a3a3a3;border-left-width:0;border-right-width:5.5px"></div>
<div class="abs" style="left:1831.4px;top:874px;border:5px solid transparent;border-left-color:#505050;border-right-width:0;border-left-width:5.5px"></div>
<div class="hl" style="left:14px;top:910.8px;width:1861px;background:#ddd"></div>
<div class="abs" style="left:1721.2px;top:903.3px;width:116.7px;height:34px;background:#1f6ca5"></div>
<svg class="abs" style="left:1734.3px;top:914.5px" width="13" height="13" viewBox="0 0 13 13"><circle cx="6.5" cy="6.5" r="5.7" fill="none" stroke="#fff" stroke-width="0.9"/><path d="M6.5 5.5V9.5M5.5 5.7H6.5M5.4 9.5H7.6" stroke="#fff" stroke-width="1.1" fill="none"/><circle cx="6.5" cy="3.7" r="0.8" fill="#fff"/></svg>
<div class="t" style="left:1756.6px;top:912.3px;font-size:15px;letter-spacing:-0.635px;color:#fff;line-height:18px">Online help</div>
<div class="abs" style="left:474.3px;top:157.9px;width:952.4px;height:618.6px;background:#fff;border:1px solid #bbb;box-shadow:0 1px 12px rgba(0,0,0,.5)"></div>
<div class="t" style="left:489.5px;top:168px;font-size:22px;color:#1e73be;line-height:28px;letter-spacing:0.160px">Connect to</div>
<svg class="abs" style="left:1401.8px;top:176px" width="12.6" height="12.6" viewBox="0 0 12 12"><path d="M0.5 0.5L11.5 11.5M11.5 0.5L0.5 11.5" stroke="#8a8a8a" stroke-width="1.1"/></svg>
<div class="abs" style="left:489px;top:214.3px;width:924px;height:468.5px;border:1px solid #c6c6c6"></div>
<div class="hl" style="left:490px;top:246px;width:900px;background:#c6c6c6"></div>
<div class="hl" style="left:490px;top:276px;width:922px;background:#c6c6c6"></div>
<div class="vl" style="left:714px;top:215px;height:421.5px;background:#c6c6c6"></div>
<div class="vl" style="left:939.3px;top:215px;height:421.5px;background:#c6c6c6"></div>
<div class="vl" style="left:1389.5px;top:215px;height:421.5px;background:#c6c6c6"></div>
<div class="t" style="left:497.4px;top:223.3px;font-size:14px;letter-spacing:-0.522px;">Tenant</div>
<div class="t" style="left:722.4px;top:223.3px;font-size:14px;letter-spacing:-0.146px;">Model</div>
<div class="t" style="left:947.4px;top:223.3px;font-size:14px;letter-spacing:-0.352px;">Entity</div>
<div class="abs" style="left:678px;top:230.5px;border:4px solid transparent;border-bottom-color:#555;border-top-width:0;border-bottom-width:3.6px"></div>
<div class="abs" style="left:903px;top:230.5px;border:4px solid transparent;border-bottom-color:#555;border-top-width:0;border-bottom-width:3.6px"></div>
<div class="abs" style="left:1374px;top:230.5px;border:4px solid transparent;border-bottom-color:#555;border-top-width:0;border-bottom-width:3.6px"></div>
<svg class="abs" style="left:694.5px;top:225.3px" width="10" height="13" viewBox="0 0 10 13"><circle cx="5" cy="4.2" r="3.7" fill="#d4d4d4" stroke="#a8a8a8" stroke-width="0.9"/><circle cx="4" cy="3.2" r="1.5" fill="#f2f2f2"/><path d="M5 8V12.8" stroke="#8a8a8a" stroke-width="1.3"/></svg>
<svg class="abs" style="left:919.5px;top:225.3px" width="10" height="13" viewBox="0 0 10 13"><circle cx="5" cy="4.2" r="3.7" fill="#d4d4d4" stroke="#a8a8a8" stroke-width="0.9"/><circle cx="4" cy="3.2" r="1.5" fill="#f2f2f2"/><path d="M5 8V12.8" stroke="#8a8a8a" stroke-width="1.3"/></svg>
<div class="abs" style="left:492.2px;top:250.2px;width:219.8px;height:22.4px;border:1px solid #c6c6c6"></div>
<div class="abs" style="left:717.2px;top:250.2px;width:219.8px;height:22.4px;border:1px solid #c6c6c6"></div>
<div class="abs" style="left:942.2px;top:250.2px;width:444.9px;height:22.4px;border:1px solid #c6c6c6"></div>
<div class="abs" style="left:490px;top:276.5px;width:900px;height:360.0px;overflow:hidden">
<div class="mrow" style="top:0.00px;left:0;height:27.05px;background:#0072c6;color:#fff;border-bottom-color:#0072c6;">
<div class="t" style="left:7.4px;letter-spacing:-0.561px">Demo</div>
<div class="t" style="left:232.4px;letter-spacing:-0.502px">Email archive</div>
<div class="t" style="left:457.4px;letter-spacing:-0.311px">jake.peralta@tech-arrow.com</div>
</div>
<div class="mrow" style="top:27.05px;left:0;height:27.05px;">
<div class="t" style="left:7.4px;letter-spacing:-0.561px">Demo</div>
<div class="t" style="left:232.4px;letter-spacing:-0.502px">Email archive</div>
<div class="t" style="left:457.4px;letter-spacing:-0.303px">Public folders</div>
</div>
<div class="mrow" style="top:54.10px;left:0;height:27.05px;">
<div class="t" style="left:7.4px;letter-spacing:-0.561px">Demo</div>
<div class="t" style="left:232.4px;letter-spacing:-0.500px">File system archive</div>
<div class="t" style="left:457.4px;letter-spacing:-0.865px">[TECHNB0015] C:</div>
</div>
<div class="mrow" style="top:81.15px;left:0;height:27.05px;">
<div class="t" style="left:7.4px;letter-spacing:-0.561px">Demo</div>
<div class="t" style="left:232.4px;letter-spacing:-0.500px">File system archive</div>
<div class="t" style="left:457.4px;letter-spacing:-0.018px">\\demo-fulltext\Share</div>
</div>
<div class="mrow" style="top:108.20px;left:0;height:27.05px;">
<div class="t" style="left:7.4px;letter-spacing:-0.561px">Demo</div>
<div class="t" style="left:232.4px;letter-spacing:-0.500px">File system archive</div>
<div class="t" style="left:457.4px;letter-spacing:-0.790px">H:\DEMO_tenant_FSA</div>
</div>
<div class="mrow" style="top:135.25px;left:0;height:27.05px;">
<div class="t" style="left:7.4px;letter-spacing:-0.561px">Demo</div>
<div class="t" style="left:232.4px;letter-spacing:-0.447px">GDPR Application</div>
<div class="t" style="left:457.4px;letter-spacing:-0.586px">Demo_app</div>
</div>
<div class="mrow" style="top:162.30px;left:0;height:27.05px;">
<div class="t" style="left:7.4px;letter-spacing:-0.561px">Demo</div>
<div class="t" style="left:232.4px;letter-spacing:-0.447px">GDPR Application</div>
<div class="t" style="left:457.4px;letter-spacing:-0.656px">DEMO_GDPRApplication</div>
</div>
<div class="mrow" style="top:189.35px;left:0;height:27.05px;">
<div class="t" style="left:7.4px;letter-spacing:-0.561px">Demo</div>
<div class="t" style="left:232.4px;letter-spacing:-0.970px">GDPR Exchange</div>
<div class="t" style="left:457.4px;letter-spacing:-0.311px">jake.peralta@tech-arrow.com</div>
</div>
<div class="mrow" style="top:216.40px;left:0;height:27.05px;">
<div class="t" style="left:7.4px;letter-spacing:-0.561px">Demo</div>
<div class="t" style="left:232.4px;letter-spacing:-0.970px">GDPR Exchange</div>
<div class="t" style="left:457.4px;letter-spacing:-0.366px">melissa.mccarthy@tech-arrow.com</div>
</div>
<div class="mrow" style="top:243.45px;left:0;height:27.05px;">
<div class="t" style="left:7.4px;letter-spacing:-0.561px">Demo</div>
<div class="t" style="left:232.4px;letter-spacing:-0.970px">GDPR Exchange</div>
<div class="t" style="left:457.4px;letter-spacing:-0.303px">sandra.bullock@tech-arrow.com</div>
</div>
<div class="mrow" style="top:270.50px;left:0;height:27.05px;">
<div class="t" style="left:7.4px;letter-spacing:-0.561px">Demo</div>
<div class="t" style="left:232.4px;letter-spacing:-0.795px">GDPR File system</div>
<div class="t" style="left:457.4px;letter-spacing:-0.742px">h:\DEMO_tenant_GDPRFile</div>
</div>
<div class="mrow" style="top:297.55px;left:0;height:27.05px;">
<div class="t" style="left:7.4px;letter-spacing:-0.561px">Demo</div>
<div class="t" style="left:232.4px;letter-spacing:-0.416px">OneDrive archive</div>
<div class="t" style="left:457.4px;letter-spacing:-0.735px">Jake Peralta</div>
</div>
<div class="mrow" style="top:324.60px;left:0;height:27.05px;">
<div class="t" style="left:7.4px;letter-spacing:-0.561px">Demo</div>
<div class="t" style="left:232.4px;letter-spacing:-0.499px">SharePoint archive</div>
<div class="t" style="left:457.4px;letter-spacing:-0.975px">DEMO</div>
</div>
<div class="mrow" style="top:351.65px;left:0;height:27.05px;">
<div class="t" style="left:7.4px;letter-spacing:-0.561px">Demo</div>
<div class="t" style="left:232.4px;letter-spacing:-0.499px">SharePoint archive</div>
<div class="t" style="left:457.4px;letter-spacing:-0.508px">hioahoneasd</div>
</div>
<div class="vl" style="left:224px;top:0;height:360px;background:#c6c6c6"></div><div class="vl" style="left:449.3px;top:0;height:360px;background:#c6c6c6"></div>
</div>
<div class="abs" style="left:1390.5px;top:277px;width:21.5px;height:359.5px;background:#f1f1f1"></div>
<div class="abs" style="left:1393.1px;top:298.4px;width:16.4px;height:282px;background:#c1c1c1"></div>
<div class="abs" style="left:1396.3px;top:286px;border:5px solid transparent;border-bottom-color:#a3a3a3;border-top-width:0"></div>
<div class="abs" style="left:1396.3px;top:622.7px;border:5px solid transparent;border-top-color:#505050;border-bottom-width:0"></div>
<div class="t" style="left:517.8px;top:651.3px;font-size:14px;letter-spacing:-0.434px;">Page 1 of 2 (20 items)</div>
<svg class="abs" style="left:671.4px;top:645.6px" width="28" height="28" viewBox="0 0 28 28"><circle cx="14" cy="14" r="12.3" fill="#fff" stroke="#dcdcdc" stroke-width="1.8"/><path d="M16 9.5 L11 14 L16 18.5Z" fill="#dcdcdc"/></svg>
<div class="abs" style="left:706.9px;top:649.1px;width:38.9px;height:19.7px;background:#0072c6"></div>
<div class="t" style="left:722.6px;top:651.3px;font-size:14px;color:#fff">1</div>
<div class="t" style="left:765.6px;top:651.3px;font-size:14px;">2</div>
<svg class="abs" style="left:796px;top:645.2px" width="28" height="28" viewBox="0 0 28 28"><circle cx="14" cy="14" r="12.3" fill="#fff" stroke="#989898" stroke-width="2.1"/><path d="M12 9.5 L17 14 L12 18.5Z" fill="#777"/></svg>
<div class="btn" style="left:489.3px;top:689.2px;width:92.7px;height:30px"></div>
<div class="t" style="left:500.8px;top:696.3px;font-size:14px;letter-spacing:-0.528px;">Reload data</div>
<div class="btn" style="left:1230px;top:736.3px;width:90.3px;height:30.7px"></div>
<div class="t" style="left:1266.4px;top:743.5px;font-size:14px;letter-spacing:-1.064px;">OK</div>
<div class="btn" style="left:1327px;top:736.3px;width:90.3px;height:30.7px"></div>
<div class="t" style="left:1352.5px;top:743.5px;font-size:14px;letter-spacing:-0.780px;">Cancel</div>
</body></html>
